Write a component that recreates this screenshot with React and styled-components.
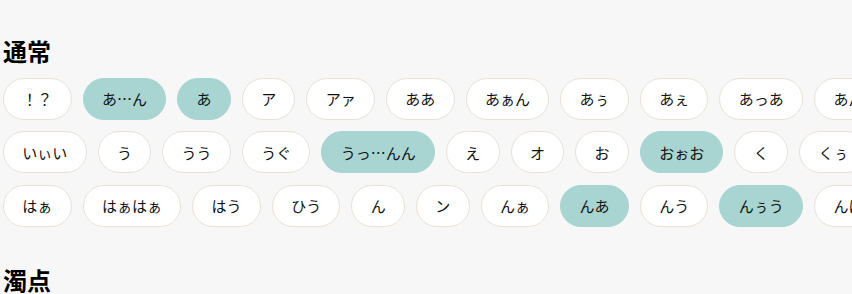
import React from "react";
import styled, { createGlobalStyle } from "styled-components";

const GlobalStyle = createGlobalStyle`
  html, body {
    margin: 0;
    padding: 0;
    background: #f7f7f7;
    overflow: hidden;
  }
  body {
    font-family: "Noto Sans CJK JP", "Noto Sans", sans-serif;
    color: #111;
  }
`;

const Page = styled.div`
  width: 852px;
  overflow: hidden;
  padding-left: 3px;
  box-sizing: border-box;
`;

const Section = styled.section`
  padding-top: 35px;
  padding-bottom: 2px;
`;

const Title = styled.h2`
  margin: 0 0 10.5px;
  font-size: 24px;
  line-height: 32px;
  font-weight: 700;
  color: #000;
`;

const Rows = styled.div`
  display: flex;
  flex-direction: column;
  gap: 11.5px;
`;

const Row = styled.div`
  display: flex;
  flex-wrap: nowrap;
  gap: 11px;
`;

const Pill = styled.button`
  flex: none;
  height: 42px;
  box-sizing: border-box;
  padding: 0 18.3px;
  display: inline-flex;
  align-items: center;
  justify-content: center;
  border-radius: 21px;
  border: 1px solid ${(p) => (p.$active ? "#a8d5d2" : "#e8e1d9")};
  background: ${(p) => (p.$active ? "#a8d5d2" : "#ffffff")};
  font-family: "Noto Sans CJK JP", "Noto Sans", sans-serif;
  font-size: 15px;
  line-height: 1;
  color: #111;
  white-space: nowrap;
  cursor: pointer;
`;

const sections = [
  {
    title: "通常",
    rows: [
      ["！？", ["あ…ん", 1], ["あ", 1], "ア", "アァ", "ああ", "あぁん", "あぅ", "あぇ", "あっあ", "あんっ", "いい"],
      ["いぃい", "う", "うう", "うぐ", ["うっ…んん", 1], "え", "オ", "お", ["おぉお", 1], "く", "くぅ", "くっ"],
      ["はぁ", "はぁはぁ", "はう", "ひう", "ん", "ン", "んぁ", ["んあ", 1], "んう", ["んぅう", 1], "んは", "んん"],
    ],
  },
  {
    title: "濁点",
    rows: [
      ["あ゛", "あ゛あ゛", "う゛", "お゛", "ん゛"],
    ],
  },
];

export default function App() {
  return (
    <>
      <GlobalStyle />
      <Page>
        {sections.map((s) => (
          <Section key={s.title}>
            <Title>{s.title}</Title>
            <Rows>
              {s.rows.map((r, i) => (
                <Row key={i}>
                  {r.map((item, j) => {
                    const [label, active] = Array.isArray(item) ? item : [item, 0];
                    return (
                      <Pill key={j} $active={!!active}>
                        {label}
                      </Pill>
                    );
                  })}
                </Row>
              ))}
            </Rows>
          </Section>
        ))}
      </Page>
    </>
  );
}
